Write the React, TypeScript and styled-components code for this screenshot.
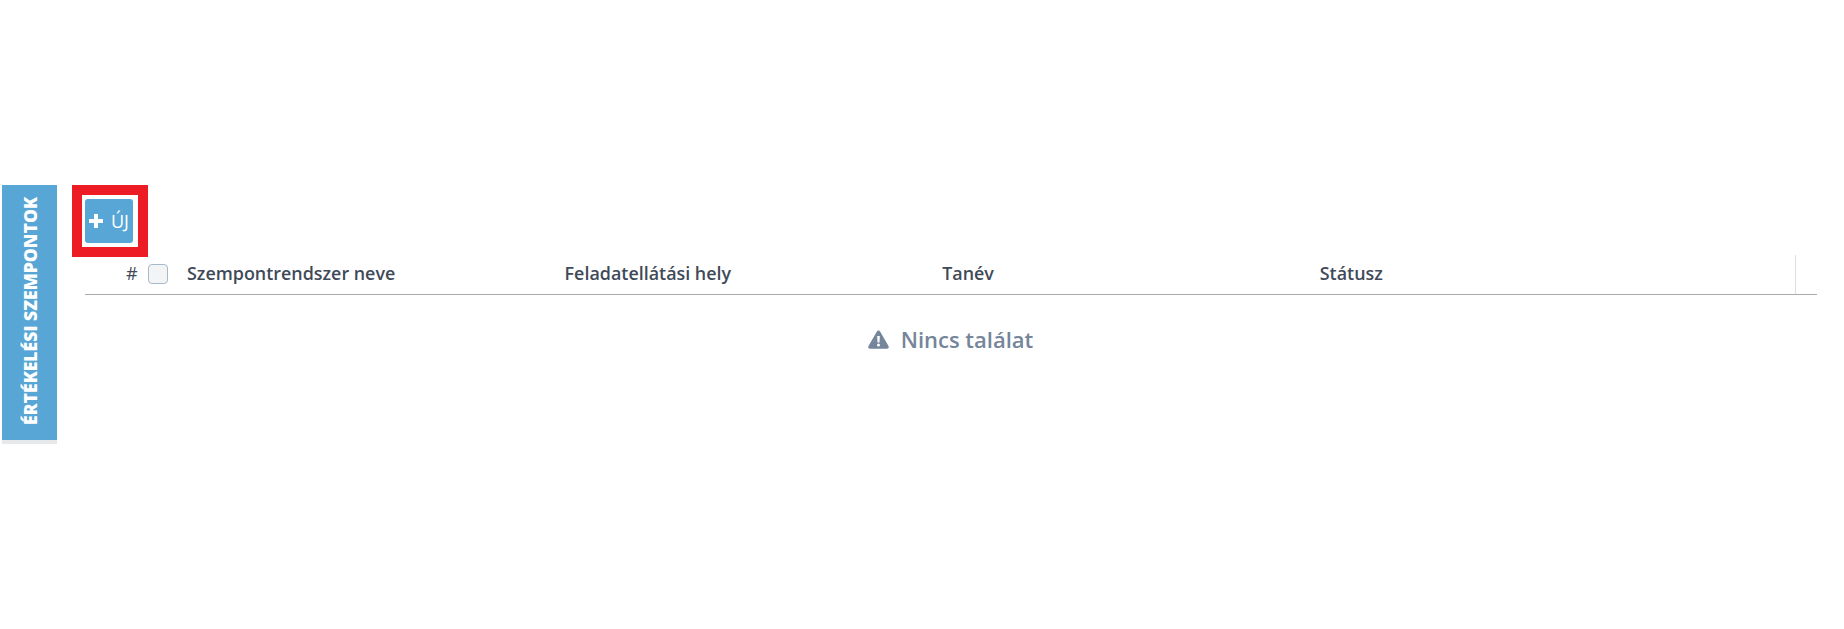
import React from 'react'
import styled, { createGlobalStyle } from 'styled-components'

const GlobalStyle = createGlobalStyle`
  html, body {
    margin: 0;
    padding: 0;
    background: #fff;
    font-family: 'Open Sans', sans-serif;
  }
`

const Page = styled.div`
  display: flex;
  align-items: flex-start;
  width: 1844px;
  height: 629px;
  padding: 185px 27px 0 2px;
  box-sizing: border-box;
  overflow: hidden;
`

const SideTab = styled.div`
  flex: none;
  display: flex;
  align-items: flex-end;
  justify-content: center;
  width: 55px;
  height: 255px;
  padding-bottom: 15px;
  box-sizing: border-box;
  background: #58a6d6;
  box-shadow: 0 4px 0 #e6e8e9;
`

const SideLabel = styled.span`
  color: #fff;
  font-size: 17.6px;
  font-weight: 800;
  white-space: nowrap;
  line-height: 24px;
  writing-mode: vertical-rl;
  transform: rotate(180deg);
`

const Main = styled.div`
  flex: 1;
  min-width: 0;
  margin-left: 28px;
`

const Toolbar = styled.div`
  display: flex;
  height: 70px;
  margin-left: -13px;
`

const Highlight = styled.div`
  width: 76px;
  height: 72px;
  padding: 4px 5px 4px 3px;
  box-sizing: border-box;
  background: #fff;
  border: 10px solid #ed1c24;
`

const NewButton = styled.button`
  display: flex;
  align-items: center;
  gap: 8px;
  width: 48px;
  height: 44px;
  padding: 0 0 0 4px;
  border: 0;
  border-radius: 3px;
  background: #58a6d6;
  color: #fff;
  font-family: 'Open Sans', sans-serif;
  font-size: 18px;
  font-weight: 400;
`

const HeaderRow = styled.div`
  display: grid;
  grid-template-columns: 102px repeat(3, 377.6px) 1fr 1px 21px;
  height: 39px;
  align-items: center;
  border-bottom: 1px solid #a9abad;
  color: #3f4a59;
  font-size: 17.9px;
  font-weight: 600;
`

const HeaderCell = styled.div`
  margin-top: -4px;
`

const SelectCell = styled.div`
  display: flex;
  align-items: center;
  padding-left: 41px;
  gap: 10px;
`

const Hash = styled.span`
  margin-top: -3px;
  font-size: 18px;
  font-weight: 400;
`

const Checkbox = styled.span`
  display: block;
  width: 20px;
  height: 20px;
  margin-top: -1px;
  box-sizing: border-box;
  background: #f3f4f5;
  border: 1px solid #a8b8cb;
  border-radius: 4px;
`

const Divider = styled.div`
  width: 1px;
  height: 39px;
  background: #dedede;
`

const Empty = styled.div`
  display: flex;
  align-items: center;
  justify-content: center;
  gap: 12px;
  width: 1731px;
  margin-top: 29px;
  color: #75859a;
  font-size: 22px;
  font-weight: 600;
`

const WarningIcon = () => (
  <svg width="21" height="19" viewBox="0 0 21 19" aria-hidden="true">
    <path
      fill="#75859a"
      fillRule="evenodd"
      d="M10.5.5c.7 0 1.2.3 1.6 1l8.4 14.6c.7 1.3-.1 2.6-1.5 2.6H2c-1.4 0-2.2-1.3-1.5-2.6L8.9 1.5c.4-.7.9-1 1.6-1ZM9.2 6l.3 6.4h2L11.8 6H9.2Zm1.3 7.6a1.5 1.5 0 1 0 0 3 1.5 1.5 0 0 0 0-3Z"
    />
  </svg>
)

const PlusIcon = () => (
  <svg width="14" height="14" viewBox="0 0 14 14" aria-hidden="true">
    <path fill="#fff" d="M5 0h4v5h5v4H9v5H5V9H0V5h5V0Z" />
  </svg>
)

const columns = ['Szempontrendszer neve', 'Feladatellátási hely', 'Tanév', 'Státusz']

const App: React.FC = () => {
  return (
    <Page>
      <GlobalStyle />
      <SideTab>
        <SideLabel>ÉRTÉKELÉSI SZEMPONTOK</SideLabel>
      </SideTab>
      <Main>
        <Toolbar>
          <Highlight>
            <NewButton>
              <PlusIcon />
              ÚJ
            </NewButton>
          </Highlight>
        </Toolbar>
        <HeaderRow>
          <SelectCell>
            <Hash>#</Hash>
            <Checkbox />
          </SelectCell>
          {columns.map((c) => (
            <HeaderCell key={c}>{c}</HeaderCell>
          ))}
          <Divider />
        </HeaderRow>
        <Empty>
          <WarningIcon />
          Nincs találat
        </Empty>
      </Main>
    </Page>
  )
}

export default App
